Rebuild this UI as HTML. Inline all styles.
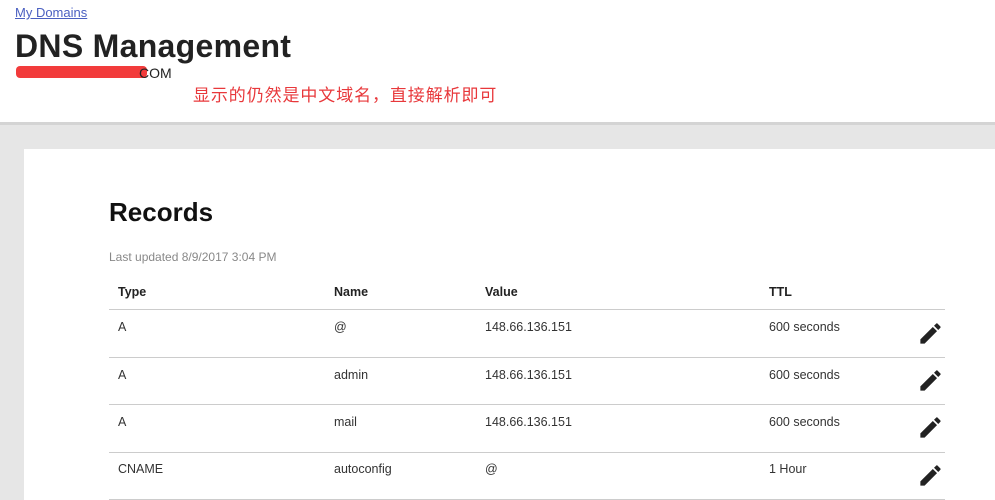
<!DOCTYPE html>
<html><head><meta charset="utf-8"><style>
body{margin:0;width:995px;height:500px;overflow:hidden;font-family:"Liberation Sans",Arial,sans-serif;background:#e6e6e6;position:relative}
.hdr{position:absolute;left:0;top:0;width:995px;height:122px;background:#fff;border-bottom:3px solid #d4d4d4}
a{position:absolute;left:15px;top:5px;font-size:13px;color:#4a5fc1;text-decoration:underline}
h1{position:absolute;left:15px;top:28px;margin:0;font-size:32px;font-weight:bold;color:#222;letter-spacing:0.3px}
.red{position:absolute;left:16px;top:66px;width:131px;height:12px;background:#f23b3b;border-radius:4px}
.com{position:absolute;left:139px;top:65px;font-size:14px;color:#222}
.cn{position:absolute;left:193px;top:81px;font-size:17px;color:#e8383b;font-family:"Liberation Sans","Noto Sans CJK SC",sans-serif;letter-spacing:0.9px}
.card{position:absolute;left:24px;top:149px;width:971px;height:351px;background:#fff}
h2{position:absolute;left:109px;top:197px;margin:0;font-size:26px;font-weight:bold;color:#111}
.lu{position:absolute;left:109px;top:250px;font-size:12px;color:#888}
.row{position:absolute;left:109px;width:836px;border-bottom:1px solid #ccc;font-size:12.5px;color:#333}
.row span{position:absolute}
.th{font-weight:bold;color:#222}
svg{position:absolute;left:808px}
</style></head><body>
<div class="hdr">
<a>My Domains</a>
<h1>DNS Management</h1>
<div class="red"></div><div class="com">COM</div>
<div class="cn">显示的仍然是中文域名，直接解析即可</div>
</div>
<div class="card"></div>
<h2>Records</h2>
<div class="lu">Last updated 8/9/2017 3:04 PM</div>
<div class="row th" style="top:270px;height:39px"><span style="left:9px;top:15px">Type</span><span style="left:225px;top:15px">Name</span><span style="left:376px;top:15px">Value</span><span style="left:660px;top:15px">TTL</span></div>
<div class="row" style="top:310px;height:47px"><span style="left:9px;top:10px">A</span><span style="left:225px;top:10px">@</span><span style="left:376px;top:10px">148.66.136.151</span><span style="left:660px;top:10px">600 seconds</span><svg style="top:10px" width="27" height="27" viewBox="0 0 24 24"><path fill="#222" d="M3 17.25V21h3.75L17.81 9.94l-3.75-3.75L3 17.25zM20.71 7.04a1 1 0 000-1.41l-2.34-2.34a1 1 0 00-1.41 0l-1.83 1.83 3.75 3.75 1.83-1.83z"/></svg></div>
<div class="row" style="top:358px;height:46px"><span style="left:9px;top:10px">A</span><span style="left:225px;top:10px">admin</span><span style="left:376px;top:10px">148.66.136.151</span><span style="left:660px;top:10px">600 seconds</span><svg style="top:9px" width="27" height="27" viewBox="0 0 24 24"><path fill="#222" d="M3 17.25V21h3.75L17.81 9.94l-3.75-3.75L3 17.25zM20.71 7.04a1 1 0 000-1.41l-2.34-2.34a1 1 0 00-1.41 0l-1.83 1.83 3.75 3.75 1.83-1.83z"/></svg></div>
<div class="row" style="top:405px;height:47px"><span style="left:9px;top:10px">A</span><span style="left:225px;top:10px">mail</span><span style="left:376px;top:10px">148.66.136.151</span><span style="left:660px;top:10px">600 seconds</span><svg style="top:9px" width="27" height="27" viewBox="0 0 24 24"><path fill="#222" d="M3 17.25V21h3.75L17.81 9.94l-3.75-3.75L3 17.25zM20.71 7.04a1 1 0 000-1.41l-2.34-2.34a1 1 0 00-1.41 0l-1.83 1.83 3.75 3.75 1.83-1.83z"/></svg></div>
<div class="row" style="top:453px;height:46px"><span style="left:9px;top:9px">CNAME</span><span style="left:225px;top:9px">autoconfig</span><span style="left:376px;top:9px">@</span><span style="left:660px;top:9px">1 Hour</span><svg style="top:9px" width="27" height="27" viewBox="0 0 24 24"><path fill="#222" d="M3 17.25V21h3.75L17.81 9.94l-3.75-3.75L3 17.25zM20.71 7.04a1 1 0 000-1.41l-2.34-2.34a1 1 0 00-1.41 0l-1.83 1.83 3.75 3.75 1.83-1.83z"/></svg></div>
</body></html>
